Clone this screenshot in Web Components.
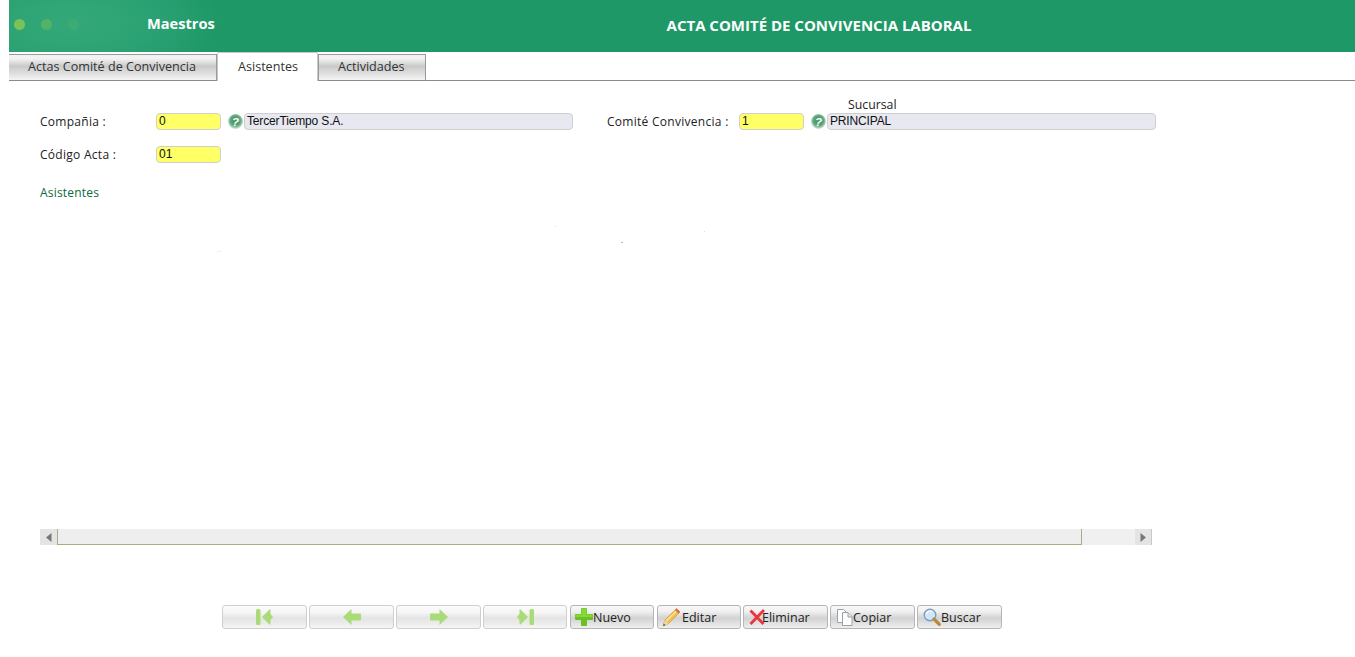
<!DOCTYPE html>
<html lang="es">
<head>
<meta charset="utf-8">
<title>Acta Comité de Convivencia Laboral</title>
<style>
	html, body { margin: 0; background: #fff; }
	body { font-family: "Open Sans", "Noto Sans", sans-serif; }
</style>
</head>
<body>
<app-shell>
	<app-header slot="header" section="Maestros" title-text="ACTA COMITÉ DE CONVIVENCIA LABORAL"></app-header>
	<tab-bar slot="tabs">
		<tab-item>Actas Comité de Convivencia</tab-item>
		<tab-item active>Asistentes</tab-item>
		<tab-item>Actividades</tab-item>
	</tab-bar>
	<acta-form slot="form"></acta-form>
	<scroll-bar slot="scroll"></scroll-bar>
	<tool-bar slot="tools">
		<tool-button width="85" disabled><svg slot="icon" viewBox="0 0 18 18" width="18" height="18"><rect x="0" y="1" width="4.500" height="16" rx="1.500" fill="#a9dc78"/><path d="M6 9 13.500 1.500h1V6L17 9l-2.500 3v4.500h-1z" fill="#a9dc78"/></svg></tool-button>
		<tool-button width="85" disabled><svg slot="icon" viewBox="0 0 18 18" width="18" height="18"><path d="M0 9 8.500 1v4.500H17q1 0 1 1v5q0 1-1 1H8.500V17z" fill="#a9dc78"/></svg></tool-button>
		<tool-button width="85" disabled><svg slot="icon" viewBox="0 0 18 18" width="18" height="18"><path d="M18 9 9.500 1v4.500H1q-1 0-1 1v5q0 1 1 1h8.500V17z" fill="#a9dc78"/></svg></tool-button>
		<tool-button width="84" disabled><svg slot="icon" viewBox="0 0 18 18" width="18" height="18"><rect x="13.500" y="1" width="4.500" height="16" rx="1.500" fill="#a9dc78"/><path d="M12 9 4.500 1.500h-1V6L1 9l2.500 3v4.500h1z" fill="#a9dc78"/></svg></tool-button>
		<tool-button width="84" push="1" inset="4"><svg slot="icon" viewBox="0 0 18 18" width="18" height="18"><path d="M7 0h4q1 0 1 1v5h5q1 0 1 1v4q0 1-1 1h-5v5q0 1-1 1H7q-1 0-1-1v-5H1q-1 0-1-1V7q0-1 1-1h5V1q0-1 1-1z" fill="#6cc024"/><path d="M7 .5h4q.5 0 .5.5v5.500H17q.5 0 .5.500v2H.5V7q0-.5.500-.5h5.500V1q0-.5.500-.5z" fill="#84d83a"/></svg>Nuevo</tool-button>
		<tool-button width="84" push="1" inset="3" gap="1"><svg slot="icon" viewBox="0 0 20 20" width="20" height="20"><path d="M2 19 4 13 15.500 1.500l3.500 3.500L7.500 16.500z" fill="#f3c04f" stroke="#c98a2a" stroke-width=".6"/><path d="M5 13 16 2.500l1 1L6 14.500z" fill="#fbe39a"/><path d="M2 19 4 13 7.500 16.500z" fill="#ecd6ae"/><path d="M2 19 2.800 16.500 4.500 18.200z" fill="#555"/><path d="M15.500 1.500l3.500 3.500-1.500 1.500-3.500-3.500z" fill="#e6604a"/></svg>Editar</tool-button>
		<tool-button width="85" inset="5" gap="-3"><svg slot="icon" viewBox="0 0 16 16" width="16" height="16"><path d="M1.500 1.500 14.500 15M15 1 1.500 15" stroke="#ea3540" stroke-width="2.800" fill="none"/></svg>Eliminar</tool-button>
		<tool-button width="85" inset="6" gap="0"><svg slot="icon" viewBox="0 0 16 17" width="16" height="17"><path d="M.5 .5h6l3 3v10h-9z" fill="#fff" stroke="#98a2ac"/><path d="M5.500 3.500h5.500l4 4v9H5.500z" fill="#fff" stroke="#98a2ac"/><path d="M11 3.500V8h4" fill="#dfe5ea" stroke="#98a2ac"/></svg>Copiar</tool-button>
		<tool-button width="85" inset="5" gap="0"><svg slot="icon" viewBox="0 0 18 18" width="18" height="18"><circle cx="7" cy="7" r="5.800" fill="#cfe6fb" stroke="#7f9cbc" stroke-width="1.400"/><path d="M3.500 6a4 3.500 0 0 1 6-2.500" fill="none" stroke="#fff" stroke-width="1.200"/><path d="M11 11l5.300 5.300" stroke="#b98a3c" stroke-width="3.200" stroke-linecap="round"/></svg>Buscar</tool-button>
	</tool-bar>
</app-shell>

<script>
class AppShell extends HTMLElement {
	constructor() {
		super();
		this.attachShadow({ mode: "open" });
		this.shadowRoot.innerHTML = `
			<style>
				:host { display: block; width: 1355px; height: 657px; overflow: hidden; box-sizing: border-box; padding-left: 9px; }
				.form { display: block; padding-left: 31px; }
				.tools { display: block; padding: 60px 0 0 213px; }
			</style>
			<slot name="header"></slot>
			<slot name="tabs"></slot>
			<div class="form"><slot name="form"></slot><slot name="scroll"></slot></div>
			<div class="tools"><slot name="tools"></slot></div>`;
	}
}

class AppHeader extends HTMLElement {
	constructor() {
		super();
		this.attachShadow({ mode: "open" });
		this.shadowRoot.innerHTML = `
			<style>
				:host { display: flex; align-items: center; height: 52px; color: #fff; font-weight: 700;
					background: radial-gradient(ellipse 150px 70px at 60px 22px, #35a878 0%, #2ba273 55%, #1f9868 100%); background-color: #1f9868; }
				.dots { display: flex; gap: 16px; width: 138px; box-sizing: border-box; padding: 0 0 4px 5px; }
				.dots i { width: 11px; height: 11px; border-radius: 50%; }
				.section { width: 160px; font-size: 14.600px; margin-top: -6px; }
				.title { flex: 1; padding-right: 24px; text-align: center; font-size: 15px; margin-top: -3px; }
			</style>
			<div class="dots">
				<i style="background:#7cc25a"></i><i style="background:#52b366"></i><i style="background:#3dac74"></i>
			</div>
			<div class="section"></div>
			<div class="title"></div>`;
		this.shadowRoot.querySelector(".section").textContent = this.getAttribute("section");
		this.shadowRoot.querySelector(".title").textContent = this.getAttribute("title-text");
	}
}

class TabBar extends HTMLElement {
	constructor() {
		super();
		this.attachShadow({ mode: "open" });
		this.shadowRoot.innerHTML = `
			<style>
				:host { display: flex; align-items: flex-end; height: 29px; box-sizing: border-box; border-bottom: 1px solid #8a8a8a; }
			</style>
			<slot></slot>`;
	}
}

class TabItem extends HTMLElement {
	constructor() {
		super();
		this.attachShadow({ mode: "open" });
		this.shadowRoot.innerHTML = `
			<style>
				:host { display: block; box-sizing: border-box; height: 27px; margin-bottom: -1px; padding: 0 20px 0 19px; font-size: 12.600px; line-height: 24px; color: #333;
					border: 1px solid #999; border-bottom-color: #8a8a8a; border-left: 0;
					background: linear-gradient(#f2f2f2 0%, #f2f2f2 15%, #c9c9c9 45%, #dcdcdc 70%, #f4f4f4 100%); }
				:host(:last-child) { border-left: 1px solid #999; }
				:host([active]) { height: 29px; padding: 0 19px 0 20px; line-height: 27px; background: #fff; border: 1px solid #c8c8c8; border-bottom: 0; border-radius: 2px 2px 0 0; }
			</style>
			<slot></slot>`;
	}
}

class FormField extends HTMLElement {
	constructor() {
		super();
		this.attachShadow({ mode: "open" });
		this.shadowRoot.innerHTML = `
			<style>
				:host { display: flex; align-items: center; height: 17px; }
				.label { flex: none; font-size: 12px; color: #222; letter-spacing: .28px; }
				.input { flex: none; box-sizing: border-box; width: 65px; height: 17px; padding-left: 2px; border: 1px solid #cfcfcf; border-radius: 4px; background: #ffff66; font: 12px/15px "Liberation Sans", sans-serif; color: #111; }
				.help { flex: none; width: 15px; height: 15px; margin: 0 1px 0 7px; }
				.desc { flex: none; box-sizing: border-box; width: 329px; height: 17px; padding-left: 2px; border: 1px solid #cfcfcf; border-radius: 4px; background: #e8e8f0; font: 12px/15px "Liberation Sans", sans-serif; color: #111; letter-spacing: -.15px; }
			</style>
			<span class="label"></span>
			<span class="input"></span>`;
		const root = this.shadowRoot;
		const label = root.querySelector(".label");
		label.textContent = this.getAttribute("label");
		label.style.width = this.getAttribute("label-width") + "px";
		root.querySelector(".input").textContent = this.getAttribute("value");
		if (this.hasAttribute("desc")) {
			root.querySelector(".input").insertAdjacentHTML("afterend", `
				<svg class="help" viewBox="0 0 15 15">
					<defs><radialGradient id="h" cx=".5" cy=".45" r=".55"><stop offset="0" stop-color="#3f9362"/><stop offset=".6" stop-color="#5aa37a"/><stop offset="1" stop-color="#d5e8db"/></radialGradient></defs>
					<circle cx="7.500" cy="7.500" r="7.400" fill="url(#h)"/>
					<text x="7.500" y="11.500" text-anchor="middle" font-family="Liberation Sans" font-size="11.500" font-weight="700" font-style="italic" fill="#fff">?</text>
				</svg>
				<span class="desc"></span>`);
			root.querySelector(".desc").textContent = this.getAttribute("desc");
		}
	}
}

class ActaForm extends HTMLElement {
	constructor() {
		super();
		this.attachShadow({ mode: "open" });
		this.shadowRoot.innerHTML = `
			<style>
				:host { display: block; position: relative; height: 448px; }
				.caption { height: 32px; box-sizing: border-box; padding: 15px 0 0 808px; font-size: 12.300px; line-height: 17px; color: #222; }
				.row { display: flex; }
				.row + .row { margin-top: 16px; }
				.row form-field + form-field { margin-left: 34px; }
				.group { margin-top: 21px; font-size: 12px; line-height: 17px; color: #0b6b3a; letter-spacing: .2px; }
				.speck { position: absolute; width: 1px; height: 1px; background: #dcdcdc; }
			</style>
			<div class="caption">Sucursal</div>
			<div class="row">
				<form-field label="Compañia :" label-width="116" value="0" desc="TercerTiempo S.A."></form-field>
				<form-field label="Comité Convivencia :" label-width="132" value="1" desc="PRINCIPAL"></form-field>
			</div>
			<div class="row">
				<form-field label="Código Acta :" label-width="116" value="01"></form-field>
			</div>
			<div class="group">Asistentes</div>
			<i class="speck" style="left:515px;top:145px"></i>
			<i class="speck" style="left:581px;top:161px;width:2px;background:#b8b8b8"></i>
			<i class="speck" style="left:664px;top:150px"></i>
			<i class="speck" style="left:177px;top:170px;width:5px;background:#eee"></i>`;
	}
}

class ScrollBar extends HTMLElement {
	constructor() {
		super();
		this.attachShadow({ mode: "open" });
		this.shadowRoot.innerHTML = `
			<style>
				:host { display: flex; width: 1112px; height: 16px; background: #f0f0f0; }
				.btn { flex: none; box-sizing: border-box; width: 17px; display: flex; align-items: center; justify-content: center; background: #e4e4e4; }
				.btn.right { border-right: 1px solid #c8c8c8; }
				.thumb { flex: none; box-sizing: border-box; width: 1025px; background: #eeeeee; border-left: 1px solid #a3b084; border-right: 1px solid #a3b084; border-bottom: 1px solid #a3b084; }
				.track { flex: 1; }
				.btn:first-child { border-bottom: 1px solid #a3b084; }
			</style>
			<div class="btn"><svg width="6" height="9" viewBox="0 0 6 9"><path d="M5.500 0v9L0 4.500z" fill="#777"/></svg></div>
			<div class="thumb"></div>
			<div class="track"></div>
			<div class="btn right"><svg width="6" height="9" viewBox="0 0 6 9"><path d="M.5 0v9L6 4.500z" fill="#777"/></svg></div>`;
	}
}

class ToolBar extends HTMLElement {
	constructor() {
		super();
		this.attachShadow({ mode: "open" });
		this.shadowRoot.innerHTML = `
			<style>
				:host { display: flex; gap: 2px; }
			</style>
			<slot></slot>`;
	}
}

class ToolButton extends HTMLElement {
	constructor() {
		super();
		this.attachShadow({ mode: "open" });
		this.shadowRoot.innerHTML = `
			<style>
				:host { display: flex; align-items: center; box-sizing: border-box; height: 24px; border: 1px solid #b5b5b5; border-radius: 3px; font-size: 12.500px; color: #222;
					background: linear-gradient(#f8f8f8 0%, #f0f0f0 25%, #d2d2d2 55%, #e2e2e2 80%, #efefef 100%); }
				:host([disabled]) { justify-content: center; border-color: #cfcfcf; background: linear-gradient(#fbfbfb 0%, #f5f5f5 30%, #e4e4e4 55%, #ececec 80%, #f6f6f6 100%); }
				.icon { display: flex; }
				.text { position: relative; }
			</style>
			<span class="icon"><slot name="icon"></slot></span><span class="text"><slot></slot></span>`;
		this.style.width = this.getAttribute("width") + "px";
		if (this.hasAttribute("push")) this.style.marginLeft = this.getAttribute("push") + "px";
		if (this.hasAttribute("inset")) this.style.paddingLeft = this.getAttribute("inset") + "px";
		if (this.hasAttribute("gap")) {
			this.shadowRoot.querySelector(".text").style.marginLeft = this.getAttribute("gap") + "px";
		}
	}
}

customElements.define("app-shell", AppShell);
customElements.define("app-header", AppHeader);
customElements.define("tab-bar", TabBar);
customElements.define("tab-item", TabItem);
customElements.define("form-field", FormField);
customElements.define("acta-form", ActaForm);
customElements.define("scroll-bar", ScrollBar);
customElements.define("tool-bar", ToolBar);
customElements.define("tool-button", ToolButton);
</script>
</body>
</html>
